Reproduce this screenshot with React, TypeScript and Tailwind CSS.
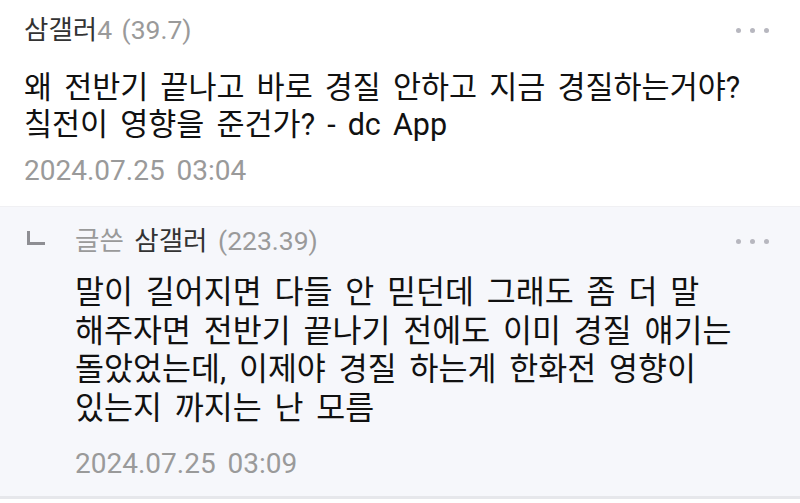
import React from "react";

const font = { fontFamily: '"Roboto", "Noto Sans CJK KR", sans-serif' };

function Dots() {
  return (
    <div className="flex items-center gap-[9px] pr-[31px]">
      <span className="h-[5px] w-[5px] rounded-full bg-[#b7b7bf]" />
      <span className="h-[5px] w-[5px] rounded-full bg-[#b7b7bf]" />
      <span className="h-[5px] w-[5px] rounded-full bg-[#b7b7bf]" />
    </div>
  );
}

export default function App() {
  return (
    <div className="w-[800px] h-[503px] bg-white overflow-hidden [word-spacing:5px]" style={font}>
      <div className="pl-[24px] pt-[15px] pb-[17px] border-b border-[#f0f0f3]">
        <div className="flex items-center justify-between h-[30px]">
          <div className="text-[26.5px] leading-[30px] [word-spacing:3px]">
            <span className="text-[#333]">삼갤러</span>
            <span className="text-[#9a9a9a]">4 (39.7)</span>
          </div>
          <Dots />
        </div>
        <div className="mt-[24px] text-[30.5px] leading-[37px] text-[#111] [word-spacing:4.5px]">
          <div>왜 전반기 끝나고 바로 경질 안하고 지금 경질하는거야?</div>
          <div>칰전이 영향을 준건가? - dc App</div>
        </div>
        <div className="mt-[9px] text-[28px] leading-[37px] text-[#9a9a9a]">2024.07.25 03:04</div>
      </div>
      <div className="bg-[#f6f7fb] pt-[19px] pb-[14px] border-b-[3px] border-[#e6e7eb]">
        <div className="flex items-center justify-between h-[30px]">
          <div className="flex items-center">
            <div className="w-[75px] flex justify-start pl-[27px]">
              <div className="mb-[6px] h-[14px] w-[18px] border-l-[3px] border-b-[3px] border-[#8e8e93]" />
            </div>
            <div className="text-[26.5px] leading-[30px] [word-spacing:4px]">
              <span className="text-[#9a9a9a]">글쓴 </span>
              <span className="text-[#333]">삼갤러 </span>
              <span className="text-[#9a9a9a]">(223.39)</span>
            </div>
          </div>
          <Dots />
        </div>
        <div className="pl-[75px] mt-[18px] text-[31.5px] leading-[38.5px] text-[#111] [word-spacing:5px]">
          <div>말이 길어지면 다들 안 믿던데 그래도 좀 더 말</div>
          <div>해주자면 전반기 끝나기 전에도 이미 경질 얘기는</div>
          <div>돌았었는데, 이제야 경질 하는게 한화전 영향이</div>
          <div>있는지 까지는 난 모름</div>
        </div>
        <div className="pl-[75px] mt-[17px] text-[28px] leading-[37px] text-[#9a9a9a]">2024.07.25 03:09</div>
      </div>
    </div>
  );
}
